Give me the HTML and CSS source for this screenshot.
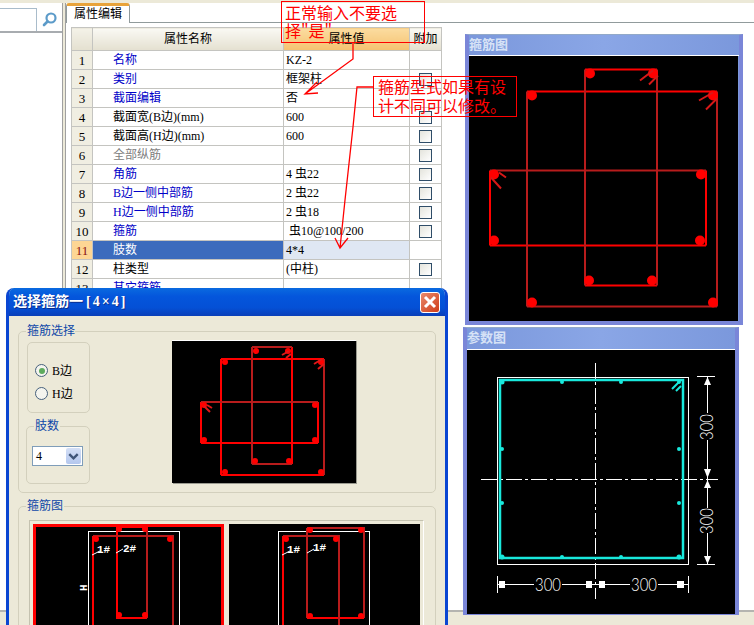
FILE: index.html
```html
<!DOCTYPE html>
<html lang="zh">
<head>
<meta charset="utf-8">
<title>属性编辑</title>
<link rel="stylesheet" href="styles.css">
</head>
<body>
<div class="page">
  <div class="topstrip"></div>
  <div class="workspace">
    <aside class="left">
      <div class="search">
        <div class="searchbox"></div>
        <svg class="searchicon" viewBox="0 0 24 24" width="24" height="24"><circle cx="14" cy="10" r="4.5" fill="none" stroke="#5c9bc9" stroke-width="2.2"/><path d="M10.5 13.5L7 17" stroke="#5c9bc9" stroke-width="2.6" stroke-linecap="round"/></svg>
      </div>
    </aside>
    <div class="splitter"></div>
    <main class="main">
      <div class="tabs"><div class="tab">属性编辑</div></div>
      <div class="tabbody">
        <table class="props">
          <colgroup><col class="c-num"><col class="c-name"><col class="c-val"><col class="c-add"></colgroup>
          <thead>
            <tr><th class="num"></th><th>属性名称</th><th class="hl">属性值</th><th>附加</th></tr>
          </thead>
          <tbody>
            <tr><td class="num">1</td><td class="name blue">名称</td><td class="val">KZ-2</td><td></td></tr>
            <tr><td class="num">2</td><td class="name blue">类别</td><td class="val">框架柱</td><td><span class="check"></span></td></tr>
            <tr><td class="num">3</td><td class="name blue">截面编辑</td><td class="val">否</td><td></td></tr>
            <tr><td class="num">4</td><td class="name">截面宽(B边)(mm)</td><td class="val">600</td><td><span class="check"></span></td></tr>
            <tr><td class="num">5</td><td class="name">截面高(H边)(mm)</td><td class="val">600</td><td><span class="check"></span></td></tr>
            <tr><td class="num">6</td><td class="name grey">全部纵筋</td><td class="val"></td><td><span class="check"></span></td></tr>
            <tr><td class="num">7</td><td class="name blue">角筋</td><td class="val">4 虫22</td><td><span class="check"></span></td></tr>
            <tr><td class="num">8</td><td class="name blue">B边一侧中部筋</td><td class="val">2 虫22</td><td><span class="check"></span></td></tr>
            <tr><td class="num">9</td><td class="name blue">H边一侧中部筋</td><td class="val">2 虫18</td><td><span class="check"></span></td></tr>
            <tr><td class="num">10</td><td class="name blue">箍筋</td><td class="val">&nbsp;虫10@100/200</td><td><span class="check"></span></td></tr>
            <tr class="active"><td class="num">11</td><td class="name">肢数</td><td class="val">4*4</td><td></td></tr>
            <tr><td class="num">12</td><td class="name">柱类型</td><td class="val">(中柱)</td><td><span class="check"></span></td></tr>
            <tr><td class="num">13</td><td class="name blue">其它箍筋</td><td class="val"></td><td></td></tr>
          </tbody>
        </table>
        <div class="rightcol">
          <section class="panel panel-a">
            <div class="paneltitle">箍筋图</div>
            <svg class="canvas-a" viewBox="468 56 269 264">
              <g stroke-width="2" fill="none">
                <path stroke="#f00" d="M584 69H656M584 285H656M489 245H705M489 170V245M705 170V245M526 91H716"/>
                <path stroke="#b81c1c" d="M584 69V285M656 69V285M526 91V306M716 91V306M526 306H716M489 170H705"/>
              </g>
              <g fill="#f00">
                <circle cx="589" cy="73" r="5"/><circle cx="652" cy="73" r="5"/><circle cx="531" cy="95" r="5"/><circle cx="712" cy="95" r="5"/>
                <circle cx="493" cy="174" r="5"/><circle cx="700" cy="174" r="5"/><circle cx="493" cy="240" r="5"/><circle cx="699" cy="240" r="5"/>
                <circle cx="588" cy="280" r="5"/><circle cx="651" cy="280" r="5"/><circle cx="531" cy="302" r="5"/><circle cx="712" cy="302" r="5"/>
              </g>
              <path stroke="#d81818" stroke-width="2" fill="none" d="M639 80L652 70M648 84L657 75M698 100L712 92M705 109L716 98M490 177L500 188M498 172L505 177"/>
            </svg>
          </section>
          <section class="panel panel-b">
            <div class="paneltitle">参数图</div>
            <svg class="canvas-b" viewBox="466 349 268 264">
              <rect x="496.500" y="376.500" width="191" height="187" fill="none" stroke="#fff"/>
              <path stroke="#fff" stroke-dasharray="16 3 3 3" d="M594.500 362V598M480 478.500H717" fill="none"/>
              <rect x="499" y="379" width="183" height="178" fill="none" stroke="#18e8dc" stroke-width="2.500"/>
              <g fill="#18e8dc">
                <circle cx="501" cy="381" r="2.500"/><circle cx="561" cy="381" r="2"/><circle cx="620" cy="381" r="2"/><circle cx="678" cy="381" r="2"/>
                <circle cx="501" cy="448" r="2"/><circle cx="678" cy="448" r="2"/><circle cx="501" cy="502" r="2"/><circle cx="678" cy="502" r="2"/>
                <circle cx="501" cy="556" r="2.500"/><circle cx="561" cy="556" r="2"/><circle cx="620" cy="556" r="2"/><circle cx="678" cy="556" r="2.500"/>
              </g>
              <path stroke="#18e8dc" stroke-width="2" d="M671 388L679 380M675 390L680 385"/>
              <g stroke="#fff" fill="none">
                <path d="M696 375.500H714M696 563.500H714M706.500 376V412M706.500 439V507M706.500 532V563"/>
                <path d="M496.500 575V592M687.500 575V592M496 583.500H533M561 583.500H629M657 583.500H687"/>
              </g>
              <g fill="#fff">
                <path d="M706.500 376L703 384H710ZM706.500 477L703 468H710ZM706.500 479L703 487H710ZM706.500 563L703 555H710Z"/>
                <path d="M498 580H504V587H498ZM585 580H591V587H585ZM598 580H604V587H598ZM676 580H683V587H676Z"/>
              </g>
              <g class="dim">
                <text x="547" y="590" text-anchor="middle" textLength="26" lengthAdjust="spacingAndGlyphs">300</text>
                <text x="643" y="590" text-anchor="middle" textLength="26" lengthAdjust="spacingAndGlyphs">300</text>
                <text transform="translate(712 426) rotate(-90)" text-anchor="middle" textLength="26" lengthAdjust="spacingAndGlyphs">300</text>
                <text transform="translate(712 520) rotate(-90)" text-anchor="middle" textLength="26" lengthAdjust="spacingAndGlyphs">300</text>
              </g>
            </svg>
          </section>
        </div>
      </div>
    </main>
  </div>
  <div class="statusbar"></div>

  <div class="dialog">
    <div class="dialogtitle">
      <span class="dialogname">选择箍筋一<span class="dims">[4×4]</span></span>
      <span class="close"><svg viewBox="0 0 20 20" width="20" height="20"><path d="M5 5L15 15M15 5L5 15" stroke="#fff" stroke-width="3"/></svg></span>
    </div>
    <div class="dialogbody">
      <div class="group group-top">
        <span class="legend legend-a">箍筋选择</span>
        <div class="leftstack">
          <div class="group radios">
            <label class="radio"><span class="dot on"></span>B边</label>
            <label class="radio"><span class="dot"></span>H边</label>
          </div>
          <div class="group limbs">
            <span class="legend legend-b">肢数</span>
            <div class="select"><span class="selval">4</span><span class="selbtn"><svg viewBox="0 0 16 16" width="15" height="16"><path d="M3.500 6L8 10.500L12.500 6" fill="none" stroke="#3f5578" stroke-width="2.500"/></svg></span></div>
          </div>
        </div>
        <div class="preview">
          <svg class="canvas-c" viewBox="172 341 183 142">
            <g stroke-width="2" fill="none">
              <path stroke="#f00" d="M221 359H324M221 475H324M221 359V475M201 443H318M318 402V443M201 402V443M292 347V464"/>
              <path stroke="#b81c1c" d="M252 347H292M252 464H292M252 347V464M324 359V475M201 402H318"/>
            </g>
            <g fill="#f00">
              <circle cx="256" cy="351" r="3"/><circle cx="288" cy="351" r="3"/><circle cx="225" cy="362" r="3"/><circle cx="321" cy="362" r="3"/>
              <circle cx="204" cy="405" r="3"/><circle cx="315" cy="405" r="3"/><circle cx="204" cy="440" r="3"/><circle cx="315" cy="440" r="3"/>
              <circle cx="255" cy="461" r="3"/><circle cx="289" cy="461" r="3"/><circle cx="225" cy="472" r="3"/><circle cx="321" cy="472" r="3"/>
            </g>
            <path stroke="#e01818" stroke-width="2" fill="none" d="M282 355L289 351M286 358L291 354M314 364L322 359M318 369L324 364M204 406L210 412M207 405L212 408"/>
          </svg>
        </div>
      </div>
      <div class="group group-bottom">
        <span class="legend legend-c">箍筋图</span>
        <div class="gallery">
          <div class="thumb selected">
            <svg viewBox="36 527 185 100" class="canvas-d">
              <rect x="88.500" y="531.500" width="91" height="120" fill="none" stroke="#fff"/>
              <path stroke="#f00" stroke-width="2" fill="none" d="M117 527V618H147M93 536V625"/>
              <path stroke="#f00" stroke-width="2" fill="none" d="M117 527H147"/>
              <path stroke="#b81c1c" stroke-width="2" fill="none" d="M93 536H173V625M147 527V618"/>
              <g fill="#f00"><circle cx="119" cy="529" r="3"/><circle cx="145" cy="529" r="3"/><circle cx="96" cy="539" r="3"/><circle cx="170" cy="539" r="3"/><circle cx="119" cy="615" r="3"/><circle cx="145" cy="615" r="3"/></g>
              <path stroke="#fff" d="M92 555L100 551M116 553L123 549"/>
              <g class="mark"><text x="97" y="553">1#</text><text x="123" y="552">2#</text></g>
              <text class="mark" transform="translate(87 591) rotate(-90)">H</text>
            </svg>
          </div>
          <div class="thumb">
            <svg viewBox="229 524 191 103" class="canvas-e">
              <rect x="278.500" y="531.500" width="91" height="120" fill="none" stroke="#fff"/>
              <path stroke="#f00" stroke-width="2" fill="none" d="M283 536V625M307 618H364"/>
              <path stroke="#b81c1c" stroke-width="2" fill="none" d="M283 536H339V625M307 528H364V618M307 528V618"/>
              <g fill="#f00"><circle cx="286" cy="539" r="3"/><circle cx="336" cy="539" r="3"/><circle cx="310" cy="530" r="3"/><circle cx="361" cy="530" r="3"/><circle cx="310" cy="616" r="3"/><circle cx="361" cy="616" r="3"/></g>
              <path stroke="#fff" d="M282 555L290 551M307 553L314 549"/>
              <g class="mark"><text x="287" y="553">1#</text><text x="313" y="551">1#</text></g>
            </svg>
          </div>
        </div>
      </div>
    </div>
  </div>

  <svg class="arrows" viewBox="0 0 754 625" width="754" height="625">
    <path d="M353 42V59L305 94M317 82L305 94L318 93" fill="none" stroke="#f00" stroke-width="1.300"/>
    <path d="M373 87H357L353 127L345 200L340 248M335 238L340 248L348 238" fill="none" stroke="#f00" stroke-width="1.300"/>
  </svg>
  <div class="note note-a">正常输入不要选<br>择"是"</div>
  <div class="note note-b">箍筋型式如果有设<br>计不同可以修改。</div>
</div>
</body>
</html>
```

FILE: styles.css
```css
* { box-sizing: border-box; }
html, body { margin: 0; padding: 0; }
body { width: 754px; height: 625px; overflow: hidden; background: #fff; }

.page {
  position: relative;
  width: 754px;
  height: 625px;
  overflow: hidden;
  background: #fff;
  display: flex;
  flex-direction: column;
  font: 12px/18px "Liberation Serif", "Noto Sans CJK SC", sans-serif;
  color: #000;
}
.topstrip { height: 3px; flex: none; background: #ece9d8; }
.workspace { height: 607px; flex: none; display: flex; }
.statusbar { flex: 1; background: #ece9d8; border-top: 2px solid #b4b4b0; }

.left { width: 62px; flex: none; padding-top: 5px; }
.search { display: flex; height: 25px; border-bottom: 2px solid #a8acb0; }
.searchbox { width: 37px; border: 1px solid #a9bccb; border-left: 0; border-bottom: 0; }
.searchicon { flex: none; }
.splitter { width: 4px; flex: none; background: #ece9d8; border-left: 1px solid #a0a0a0; border-right: 1px solid #a0a0a0; }

.main { flex: 1; min-width: 0; display: flex; flex-direction: column; }
.tabs { height: 20px; flex: none; display: flex; border-bottom: 1px solid #919b9c; }
.tab {
  width: 64px;
  height: 20px;
  background: #fff;
  border: 1px solid #919b9c;
  border-top: 3px solid #e8a33a;
  border-bottom: 0;
  border-radius: 3px 3px 0 0;
  font-size: 12px;
  line-height: 16px;
  padding-left: 7px;
}
.tabbody { flex: 1; display: flex; align-items: flex-start; padding: 4px 0 0 5px; }

.props { flex: none; width: 370px; table-layout: fixed; border-collapse: collapse; }
.c-num { width: 21px; }
.c-name { width: 191px; }
.c-val { width: 126px; }
.c-add { width: 32px; }
.props th, .props td { border: 1px solid #c4c4c0; padding: 0; height: 19px; line-height: 17px; font-weight: 400; white-space: nowrap; overflow: hidden; }
.props th { height: 23px; text-align: center; background: linear-gradient(#faf9f4, #e4e0d0); }
.props th.hl { background: linear-gradient(#fbdca0, #f5c270); }
.props th.num { background: linear-gradient(#f4f2e8, #e4e0d0); }
.props td.num { text-align: center; background: #f0eee2; font-size: 13px; }
.props td.name { padding-left: 20px; }
.props td.val { padding-left: 2px; }
.blue { color: #0000c8; }
.grey { color: #808080; }
.props .active .num { background: #fdd694; color: #8a1010; }
.props .active .name { background: #3b6bbd; color: #fff; }
.props .active .val { background: #dfe7f3; }
.check {
  display: block;
  width: 13px;
  height: 13px;
  margin: 0 0 0 9px;
  border: 1px solid #2f4d68;
  background: linear-gradient(135deg, #e4e4dc, #fff);
}

.rightcol { margin: 7px 0 0 23px; width: 278px; flex: none; display: flex; flex-direction: column; gap: 2px; }
.panel {
  position: relative;
  z-index: 1;
  background: linear-gradient(90deg, #7b98dc, #8aa6e6 50%, #7b98dc);
  border: 4px solid #7a86d8;
  border-top-width: 1px;
  border-top-color: #92a9c8;
}
.panel-a { width: 278px; height: 291px; }
.panel-b { width: 276px; height: 288px; margin-left: -2px; }
.paneltitle { height: 20px; font-size: 13px; font-weight: 700; line-height: 20px; color: #d6e2f6; border-bottom: 1px solid #fff; box-sizing: content-box; }
.panel-b .paneltitle { height: 21px; }
.panel svg { display: block; background: #000; }
.canvas-a { width: 269px; height: 265px; }
.canvas-b { width: 268px; height: 264px; }
.dim text { fill: #fff; font: 300 18px "Lato", sans-serif; }

.dialog {
  position: absolute;
  z-index: 2;
  left: 6px;
  top: 288px;
  width: 442px;
  height: 340px;
  border: 3px solid #0a46d2;
  border-top: 0;
  border-radius: 8px 8px 0 0;
  background: #ece9d8;
  overflow: hidden;
}
.dialogtitle {
  height: 28px;
  margin: 0 -3px;
  padding: 0 6px 0 7px;
  display: flex;
  align-items: center;
  justify-content: space-between;
  background: linear-gradient(#0a6ae0 0, #0456dc 30%, #0450d6 70%, #0a3fb8 100%);
  color: #fff;
  font-size: 14px;
  font-weight: 700;
}
.dialogname { text-shadow: 1px 1px 0 #0a2f90; }
.dims { letter-spacing: 2px; margin-left: 3px; }
.close {
  width: 20px;
  height: 21px;
  border: 1px solid #fff;
  border-radius: 3px;
  background: linear-gradient(135deg, #e88a6c, #d03c18);
  display: flex;
  align-items: center;
  justify-content: center;
  margin-right: 2px;
}
.close svg { flex: none; }
.dialogbody { padding: 15px 9px 0 9px; }

.group { position: relative; border: 1px solid #d3d0bd; border-radius: 5px; }
.legend { position: absolute; background: #ece9d8; color: #0f48a8; padding: 0 0 0 1px; line-height: 14px; font-size: 12px; }
.group-top { height: 162px; display: flex; padding: 8px 0 0 8px; align-items: flex-start; }
.legend-a { left: 7px; top: -8px; }
.leftstack { width: 63px; flex: none; margin-top: 2px; display: flex; flex-direction: column; }
.radios { height: 71px; padding-top: 16px; }
.radio { display: flex; align-items: center; height: 23px; padding-left: 7px; gap: 4px; }
.dot {
  width: 13px;
  height: 13px;
  border-radius: 50%;
  border: 1px solid #46607c;
  background: #f4f4ee;
  display: flex;
  align-items: center;
  justify-content: center;
}
.dot.on::after { content: ""; width: 6px; height: 6px; border-radius: 50%; background: #5dab5d; }
.limbs { height: 58px; margin: 13px 0 0 -1px; width: 64px; padding: 19px 0 0 5px; }
.legend-b { left: 7px; top: -8px; padding: 0 1px; }
.select { width: 51px; height: 20px; border: 1px solid #7f9db9; background: #fff; display: flex; justify-content: space-between; align-items: center; padding: 0 1px 0 3px; }
.selbtn { width: 15px; height: 16px; background: linear-gradient(#d4dff6, #b4c7ee); border-radius: 2px; display: block; }
.selbtn svg { display: block; }
.preview { margin-left: 82px; width: 184px; height: 143px; background: #000; border-top: 1px solid #fff; box-shadow: 1px 1px 0 #9a9a90; }
.preview svg { display: block; width: 183px; height: 142px; }
.canvas-c { background: #000; }

.group-bottom { margin-top: 13px; height: 130px; padding: 13px 0 0 10px; }
.legend-c { left: 7px; top: -8px; padding: 0 1px; }
.gallery { border: 1px solid #c4c2b0; border-right-color: #fff; padding: 3px 3px 0 3px; width: 395px; height: 120px; display: flex; gap: 5px; }
.thumb { width: 191px; height: 116px; background: #000; flex: none; }
.thumb.selected { border: 3px solid #f00; border-bottom: 0; }
.thumb svg { display: block; }
.canvas-d { width: 185px; height: 100px; }
.canvas-e { width: 191px; height: 103px; }
.mark, .mark text { fill: #fff; font: 700 11px "Liberation Mono", monospace; }

.arrows { position: absolute; z-index: 3; left: 0; top: 0; pointer-events: none; }
.note {
  position: absolute;
  z-index: 3;
  border: 1px solid #f00;
  color: #f00;
  font: 16px/18px "Noto Sans CJK SC", sans-serif;
  padding: 1px 3px 0;
  white-space: nowrap;
}
.note-a { left: 281px; top: 1px; width: 144px; height: 42px; }
.note-b { left: 373px; top: 76px; width: 144px; height: 41px; padding: 0 0 0 4px; line-height: 19px; }
```
